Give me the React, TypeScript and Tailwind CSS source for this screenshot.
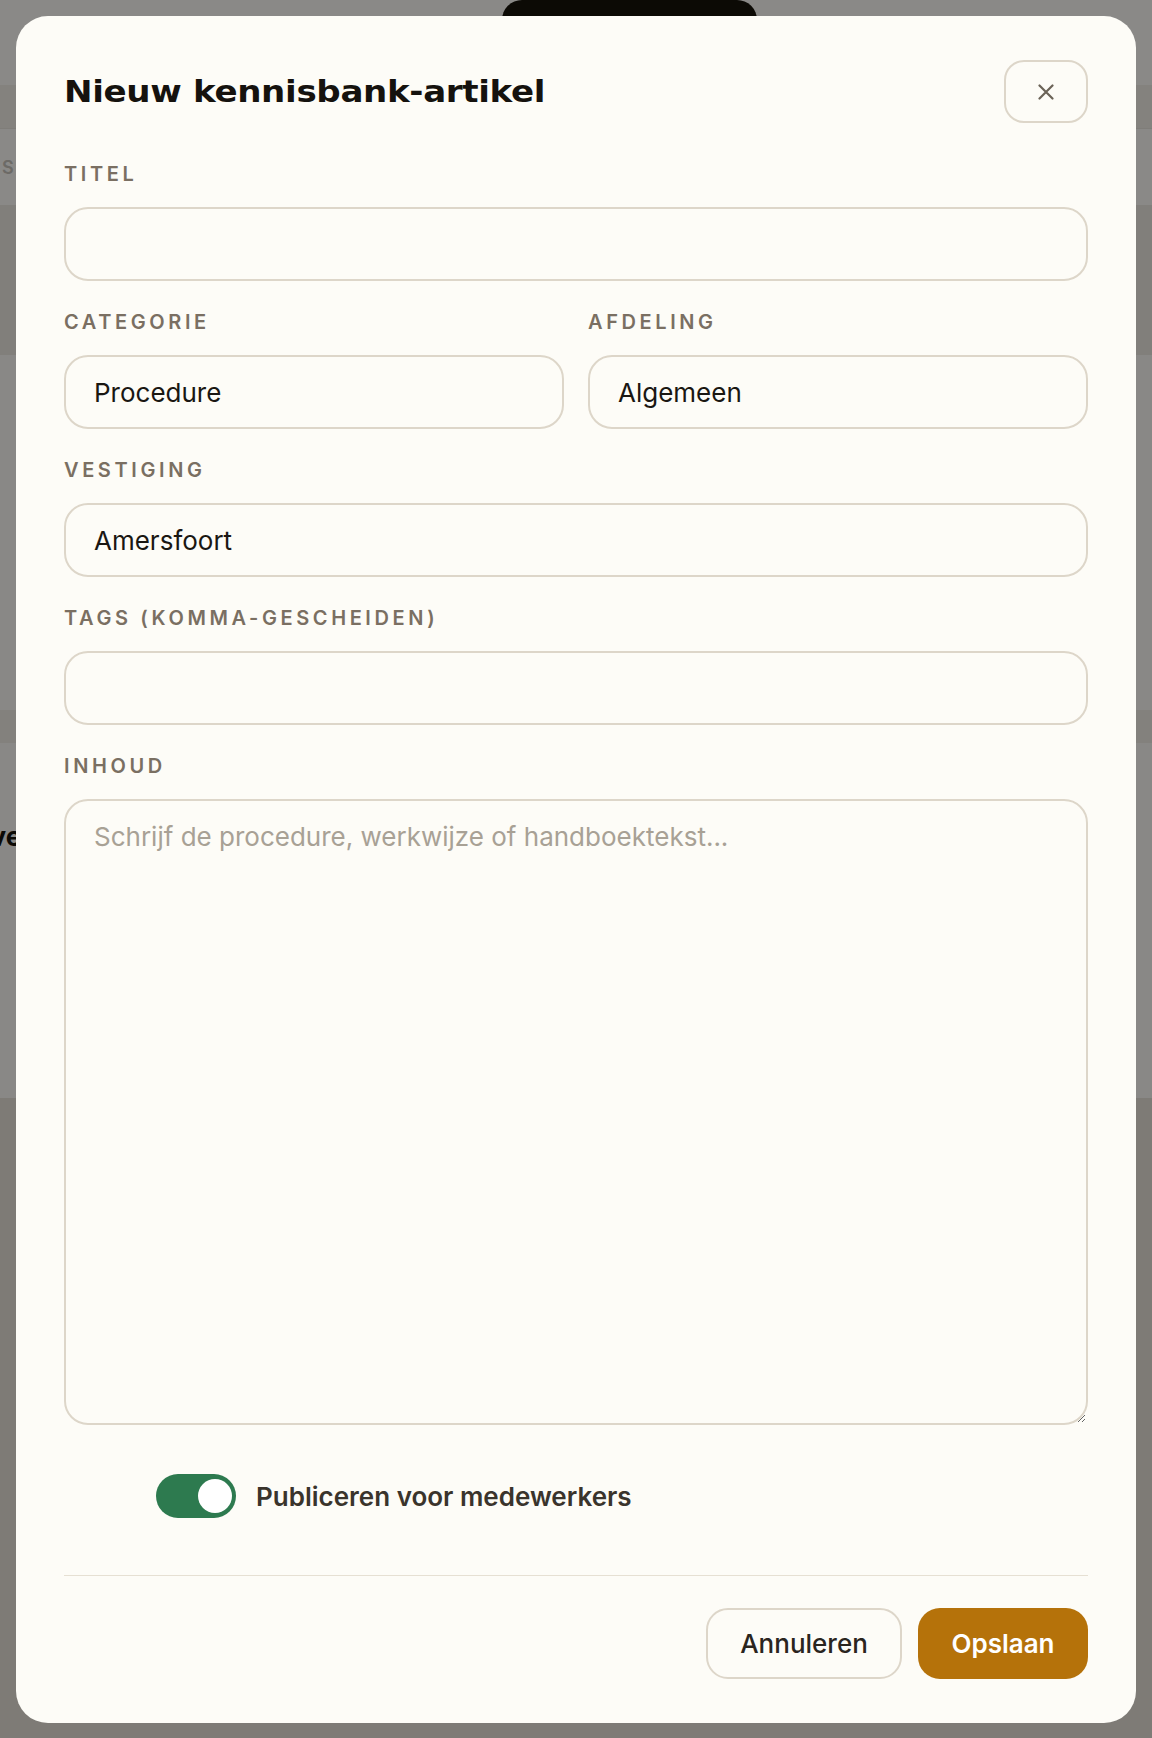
import { useState } from 'react'

// Modal "Nieuw kennisbank-artikel" boven een gedimde pagina.
const label =
  'mb-[21px] block h-6 text-[20px] font-semibold uppercase leading-6 tracking-[0.18em] text-[#7a6f62]'
const field =
  'h-[74px] w-full rounded-3xl border-2 border-[#ddd6c9] bg-transparent px-7 text-[26px] text-[#1a1712] outline-none placeholder:text-[#a8a195]'

function Backdrop() {
  return (
    <div className="flex h-full flex-col">
      <div className="h-[85px] bg-[#8a8987]" />
      <div className="h-[43px] bg-[#84827e]" />
      <div className="flex h-[77px] items-center border-t border-[#7f7d79] bg-[#8a8987]">
        <span className="pl-[2px] text-[18px] font-semibold tracking-[0.2em] text-[#6c6a66]">S</span>
      </div>
      <div className="h-[150px] bg-[#817f7b]" />
      <div className="h-[355px] bg-[#898886]" />
      <div className="h-[33px] bg-[#83817d]" />
      <div className="h-[355px] bg-[#898886] pt-[74px]">
        <span className="-ml-[10px] text-[27px] font-bold text-[#0c0a05]">ve</span>
      </div>
      <div className="flex-1 bg-[#7e7b76]" />
    </div>
  )
}

export default function App() {
  const [titel, setTitel] = useState('')
  const [categorie, setCategorie] = useState('Procedure')
  const [afdeling, setAfdeling] = useState('Algemeen')
  const [vestiging, setVestiging] = useState('Amersfoort')
  const [tags, setTags] = useState('')
  const [inhoud, setInhoud] = useState('')
  const [published, setPublished] = useState(true)

  return (
    <div className="relative h-[1738px] w-full overflow-hidden bg-[#898886] font-['Inter','Noto_Sans',sans-serif]">
      <Backdrop />
      <div className="absolute left-[502px] top-0 h-10 w-[255px] rounded-[20px] bg-[#0c0a05]" />

      <div className="absolute left-4 right-4 top-4 bottom-[15px] flex flex-col rounded-[32px] bg-[#fdfcf7] px-12 pt-11 pb-11">
        <div className="flex h-[63px] items-center justify-between">
          <h1 className="origin-left scale-x-[1.1] font-['DejaVu_Sans',sans-serif] text-[31px] font-bold tracking-[-0.01em] text-[#15120e]">
            Nieuw kennisbank-artikel
          </h1>
          <button
            type="button"
            aria-label="Sluiten"
            className="grid h-[63px] w-[84px] place-items-center rounded-[20px] border-2 border-[#ddd6c9]"
          >
            <svg width="16" height="16" viewBox="0 0 16 16" fill="none">
              <path d="M1.5 1.5L14.5 14.5M14.5 1.5L1.5 14.5" stroke="#6b6357" strokeWidth="2.2" strokeLinecap="round" />
            </svg>
          </button>
        </div>

        <div className="mt-[39px] flex flex-col gap-[29px]">
          <div>
            <label className={label}>Titel</label>
            <input className={field} value={titel} onChange={(e) => setTitel(e.target.value)} />
          </div>
          <div className="grid grid-cols-2 gap-6">
            <div>
              <label className={label}>Categorie</label>
              <input className={field} value={categorie} onChange={(e) => setCategorie(e.target.value)} />
            </div>
            <div>
              <label className={label}>Afdeling</label>
              <input className={field} value={afdeling} onChange={(e) => setAfdeling(e.target.value)} />
            </div>
          </div>
          <div>
            <label className={label}>Vestiging</label>
            <input className={field} value={vestiging} onChange={(e) => setVestiging(e.target.value)} />
          </div>
          <div>
            <label className={label}>Tags (komma-gescheiden)</label>
            <input className={field} value={tags} onChange={(e) => setTags(e.target.value)} />
          </div>
          <div>
            <label className={label}>Inhoud</label>
            <textarea
              className="block h-[626px] w-full rounded-3xl border-2 border-[#ddd6c9] bg-transparent px-7 py-4 text-[26px] leading-[1.5] text-[#1a1712] outline-none placeholder:text-[#a8a195]"
              value={inhoud}
              onChange={(e) => setInhoud(e.target.value)}
              placeholder="Schrijf de procedure, werkwijze of handboektekst..."
            />
          </div>
        </div>

        <div className="mt-[49px] flex items-center gap-5 pl-[92px]">
          <button
            type="button"
            onClick={() => setPublished((p) => !p)}
            className={`flex h-11 w-20 items-center rounded-full px-[4px] ${
              published ? 'justify-end bg-[#2d7a4f]' : 'justify-start bg-[#d6cfc2]'
            }`}
            aria-pressed={published}
          >
            <span className="h-[34px] w-[34px] rounded-full bg-white" />
          </button>
          <span className="text-[26px] font-semibold text-[#3a342c]">Publiceren voor medewerkers</span>
        </div>

        <div className="mt-[57px] h-0.5 bg-[#e6e0d3]" />

        <div className="mt-[32px] flex justify-end gap-4">
          <button
            type="button"
            className="h-[71px] w-[196px] rounded-[22px] border-2 border-[#ddd6c9] text-[26px] font-medium text-[#2a251e]"
          >
            Annuleren
          </button>
          <button
            type="button"
            className="h-[71px] w-[170px] rounded-[22px] bg-[#b5720a] text-[26px] font-semibold text-white"
          >
            Opslaan
          </button>
        </div>
      </div>
    </div>
  )
}
